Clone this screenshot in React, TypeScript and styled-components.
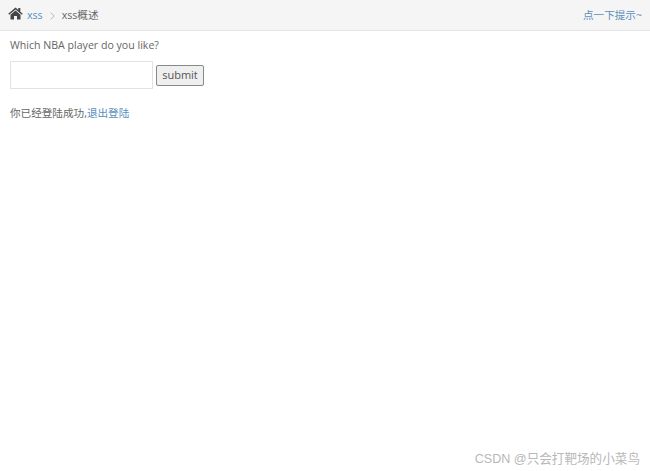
import React from 'react';
import styled, { createGlobalStyle } from 'styled-components';

const GlobalStyle = createGlobalStyle`
  html, body {
    margin: 0;
    padding: 0;
    background: #fff;
  }
  body {
    font-family: "Open Sans", "Noto Sans CJK SC", sans-serif;
    font-size: 10.6px;
    line-height: 16px;
    color: #666;
  }
`;

const Page = styled.div`
  position: relative;
  width: 650px;
  height: 471px;
  overflow: hidden;
`;

const Breadcrumbs = styled.div`
  display: flex;
  align-items: center;
  justify-content: space-between;
  height: 30px;
  padding: 0 9px 0 8px;
  background: #f5f5f5;
  border-bottom: 1px solid #e5e5e5;
`;

const Trail = styled.div`
  display: flex;
  align-items: center;
`;

const HomeIcon = styled.svg`
  width: 15px;
  height: 13px;
  margin-top: -3px;
  margin-right: 4px;
  fill: #444;
`;

const Crumb = styled.a`
  color: #5b8fbc;
  text-decoration: none;
`;

const Chevron = styled.svg`
  width: 5px;
  height: 8px;
  margin: 1px 7px 0 7px;
  fill: none;
  stroke: #b2b6bf;
  stroke-width: 1;
`;

const Current = styled.span`
  color: #666;
`;

const Hint = styled.a`
  margin-right: -1px;
  color: #5b8fbc;
  text-decoration: none;
`;

const Content = styled.div`
  padding: 6px 10px 0;
`;

const Question = styled.p`
  margin: 0 0 8px;
`;

const Form = styled.form`
  display: flex;
  align-items: center;
  gap: 3px;
`;

const TextInput = styled.input`
  box-sizing: border-box;
  width: 143px;
  height: 28px;
  border: 1px solid #e2e2e2;
  background: #fff;
  padding: 0 4px;
`;

const Submit = styled.button`
  box-sizing: border-box;
  width: 48px;
  height: 21px;
  padding: 0;
  border: 1px solid #888;
  border-radius: 2px;
  background: #efefef;
  color: #555;
  font: inherit;
  font-size: 11px;
`;

const Status = styled.p`
  margin: 16px 0 0;
`;

const Logout = styled.a`
  color: #5b8fbc;
  text-decoration: none;
`;

const Watermark = styled.div`
  position: absolute;
  right: 10px;
  bottom: 3px;
  color: #b8b8b8;
  font-family: "Liberation Sans", "Noto Sans CJK SC", sans-serif;
  font-size: 12.6px;
  line-height: 18px;
`;

export default function App() {
  return (
    <Page>
      <GlobalStyle />
      <Breadcrumbs>
        <Trail>
          <HomeIcon viewBox="0 0 16 14">
            <path d="M8 0.6 L0.2 7.2 L1.2 8.4 L8 2.7 L14.8 8.4 L15.8 7.2 L13.2 5 L13.2 1 L11 1 L11 3.1 Z" />
            <path d="M8 3.8 L2.6 8.3 L2.6 13.4 L6.4 13.4 L6.4 9.6 L9.6 9.6 L9.6 13.4 L13.4 13.4 L13.4 8.3 Z" />
          </HomeIcon>
          <Crumb href="#">xss</Crumb>
          <Chevron viewBox="0 0 5 8">
            <path d="M0.8 0.6 L4.2 4 L0.8 7.4" />
          </Chevron>
          <Current>xss概述</Current>
        </Trail>
        <Hint href="#">点一下提示~</Hint>
      </Breadcrumbs>
      <Content>
        <Question>Which NBA player do you like?</Question>
        <Form>
          <TextInput type="text" />
          <Submit type="button">submit</Submit>
        </Form>
        <Status>
          你已经登陆成功,<Logout href="#">退出登陆</Logout>
        </Status>
      </Content>
      <Watermark>CSDN @只会打靶场的小菜鸟</Watermark>
    </Page>
  );
}
